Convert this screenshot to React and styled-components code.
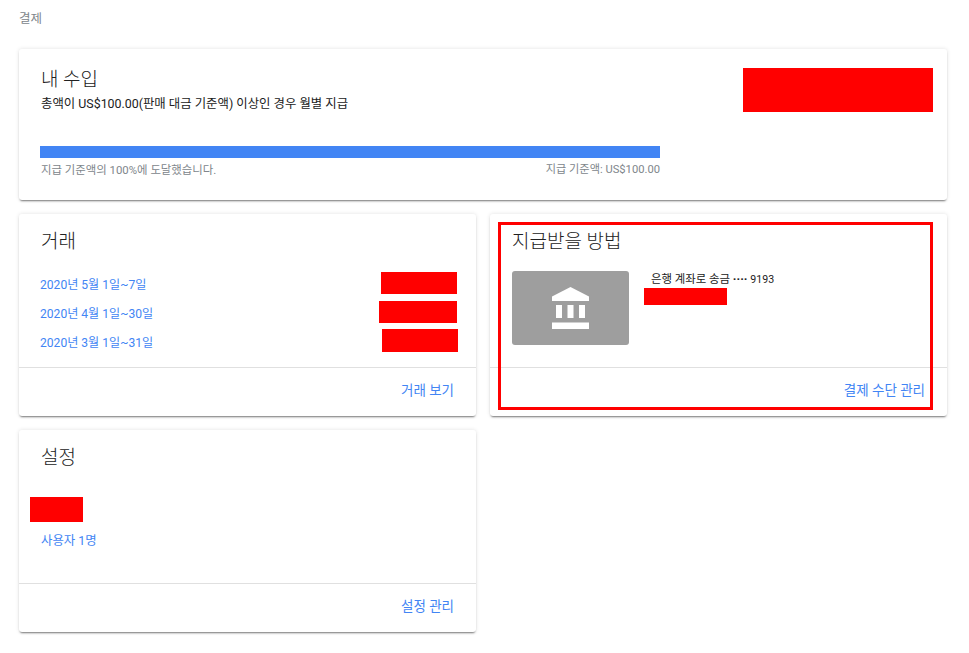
import React from 'react'
import styled, { createGlobalStyle } from 'styled-components'

const GlobalStyle = createGlobalStyle`
body {
  margin: 0;
  background: #fff;
  font-family: Roboto, "Noto Sans CJK KR", sans-serif;
  color: #212121;
}
`

const Page = styled.div`
position: relative;
width: 969px;
height: 653px;
overflow: hidden;
box-sizing: border-box;
padding: 0 22px 0 19px;
`

const Crumb = styled.div`
height: 49px;
padding-top: 10px;
box-sizing: border-box;
font-size: 12.5px;
line-height: 17px;
color: #80868b;
`

const Grid = styled.div`
display: grid;
grid-template-columns: 457px 457px;
gap: 14px;
`

const Card = styled.section`
position: relative;
height: ${props => props.height}px;
grid-column: ${props => (props.wide ? '1 / 3' : 'auto')};
background: #fff;
border-radius: 3px;
box-shadow: 0 2px 2px -1px rgba(0, 0, 0, 0.5), 0 0 4px rgba(0, 0, 0, 0.12);
display: flex;
flex-direction: column;
`

const Body = styled.div`
flex: 1;
padding: ${props => (props.wide ? 18 : 15)}px 22px 0 21px;
`

const Title = styled.h2`
margin: 0 0 0 1px;
font-size: 19px;
line-height: 26px;
font-weight: 300;
color: #212121;
`

const Sub = styled.p`
margin: 3px 0 0 1px;
font-size: 12.4px;
line-height: 16px;
color: #212121;
`

const Progress = styled.div`
margin-top: 34px;
width: 620px;
height: 12px;
background: #4285f4;
`

const ProgressLabels = styled.div`
box-sizing: border-box;
width: 620px;
margin-top: 4px;
padding-left: 1px;
display: flex;
justify-content: space-between;
font-size: 11.4px;
line-height: 16px;
color: #80868b;
`

const Threshold = styled.span`
font-size: 11.2px;
`

const Rows = styled.div`
margin-top: 20px;
display: flex;
flex-direction: column;
gap: 9px;
`

const LinkText = styled.a`
display: block;
font-size: 12.1px;
line-height: 20px;
color: #4285f4;
`

const Footer = styled.div`
height: 49px;
flex: none;
box-sizing: border-box;
border-top: 1px solid #e0e0e0;
padding: 12px 22px 0;
display: flex;
justify-content: flex-end;
font-size: 13.5px;
line-height: 20px;
color: #4285f4;
`

const Payment = styled.div`
margin-top: 16px;
display: flex;
gap: 22px;
margin-left: 1px;
`

const BankTile = styled.div`
width: 117px;
height: 74px;
border-radius: 3px;
background: #9e9e9e;
display: flex;
align-items: center;
justify-content: center;
`

const BankText = styled.div`
font-size: 11.4px;
line-height: 16px;
color: #212121;
white-space: nowrap;
`

const Dots = styled.b`
font-weight: 900;
`

const Digits = styled.span`
font-size: 10.6px;
`

const SettingsLink = styled(LinkText)`
margin: 60px 0 0 1px;
font-size: 12.4px;
`

const Redact = styled.div`
position: absolute;
left: ${props => props.x}px;
top: ${props => props.y}px;
width: ${props => props.w}px;
height: ${props => props.h}px;
background: #f00;
`

const Highlight = styled.div`
position: absolute;
left: 498px;
top: 222px;
width: 435px;
height: 188px;
box-sizing: border-box;
border: 3px solid #f00;
`

function BankIcon() {
  return (
    <svg width="37" height="42" viewBox="0 0 37 42" fill="#fff">
      <path d="M18.5 0 L37 9.5 V14 H0 V9.5 Z" />
      <rect x="4" y="18" width="6" height="13" />
      <rect x="15.5" y="18" width="6" height="13" />
      <rect x="27" y="18" width="6" height="13" />
      <rect x="0" y="35.5" width="37" height="6.5" />
    </svg>
  )
}

export default function App() {
  return (
    <Page>
      <GlobalStyle />
      <Crumb>결제</Crumb>
      <Grid>
        <Card wide height={151}>
          <Body wide>
            <Title>내 수입</Title>
            <Sub>총액이 US$100.00(판매 대금 기준액) 이상인 경우 월별 지급</Sub>
            <Progress />
            <ProgressLabels>
              <span>지급 기준액의 100%에 도달했습니다.</span>
              <Threshold>지급 기준액: US$100.00</Threshold>
            </ProgressLabels>
          </Body>
          <Redact x={724} y={19} w={190} h={44} />
        </Card>

        <Card height={202}>
          <Body>
            <Title>거래</Title>
            <Rows>
              <LinkText>2020년 5월 1일~7일</LinkText>
              <LinkText>2020년 4월 1일~30일</LinkText>
              <LinkText>2020년 3월 1일~31일</LinkText>
            </Rows>
          </Body>
          <Footer>거래 보기</Footer>
          <Redact x={362} y={58} w={76} h={22} />
          <Redact x={360} y={87} w={78} h={22} />
          <Redact x={363} y={115} w={76} h={23} />
        </Card>

        <Card height={202}>
          <Body>
            <Title>지급받을 방법</Title>
            <Payment>
              <BankTile>
                <BankIcon />
              </BankTile>
              <BankText>은행 계좌로 송금 <Dots>····</Dots> <Digits>9193</Digits></BankText>
            </Payment>
          </Body>
          <Footer>결제 수단 관리</Footer>
          <Redact x={154} y={74} w={83} h={17} />
        </Card>

        <Card height={202}>
          <Body>
            <Title>설정</Title>
            <SettingsLink>사용자 1명</SettingsLink>
          </Body>
          <Footer>설정 관리</Footer>
          <Redact x={11} y={67} w={53} h={25} />
        </Card>
      </Grid>
      <Highlight />
    </Page>
  )
}
